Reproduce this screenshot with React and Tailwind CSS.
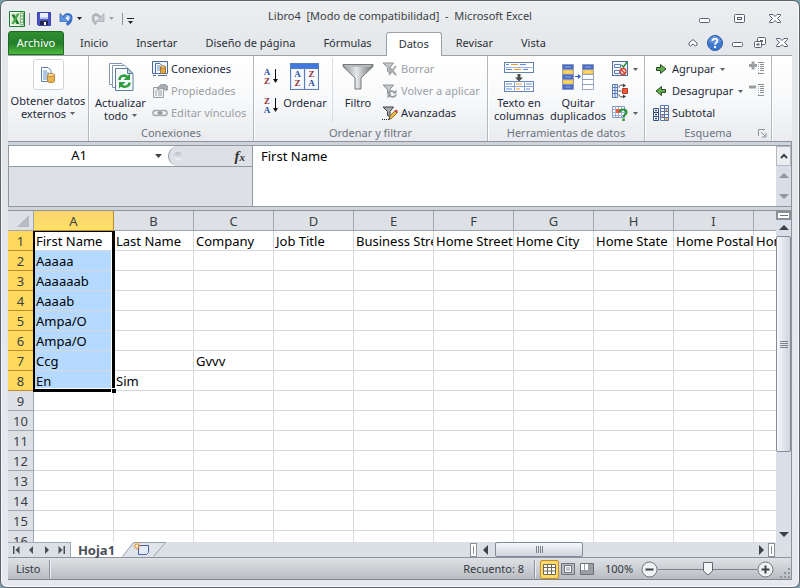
import { useState } from 'react';

const TABS = ['Inicio', 'Insertar', 'Diseño de página', 'Fórmulas', 'Datos', 'Revisar', 'Vista'];
const COLUMNS = ['A', 'B', 'C', 'D', 'E', 'F', 'G', 'H', 'I', 'J'];
const ROWS = [
  ['First Name', 'Last Name', 'Company', 'Job Title', 'Business Street', 'Home Street', 'Home City', 'Home State', 'Home Postal Code', 'Home Country'],
  ['Aaaaa'],
  ['Aaaaaab'],
  ['Aaaab'],
  ['Ampa/O'],
  ['Ampa/O'],
  ['Ccg', '', 'Gvvv'],
  ['En', 'Sim'],
  [], [], [], [], [], [], [], []
];

/* ---------- small shapes ---------- */

function Caret({ className = 'text-[#5a5f66]' }) {
  return (
    <svg width="5" height="3" viewBox="0 0 5 3" className={`inline-block shrink-0 ${className}`}>
      <path d="M0 0h5L2.5 3z" fill="currentColor" />
    </svg>
  );
}

function Arrow({ dir, className = 'text-[#3c4147]' }) {
  const paths = {
    up: 'M0 7L5 2l5 5z',
    down: 'M0 3l5 5 5-5z',
    left: 'M7 0L2 5l5 5z',
    right: 'M3 0l5 5-5 5z'
  };
  return (
    <svg width="10" height="10" viewBox="0 0 10 10" className={`shrink-0 ${className}`}>
      <path d={paths[dir]} fill="currentColor" />
    </svg>
  );
}

function Glyph({ w = 16, h = 16, children }) {
  return (
    <svg width={w} height={h} viewBox={`0 0 ${w} ${h}`} className="shrink-0" fill="none">
      {children}
    </svg>
  );
}

/* ---------- title bar icons ---------- */

const ExcelIcon = () => (
  <Glyph>
    <path d="M.5.5h15v15H.5z" fill="#fff" stroke="#1e7b34" />
    <path d="M11 2h3.500v12H11z" fill="#e7f3e4" stroke="#5aa35f" />
    <path d="M11 5h3.500M11 8h3.500M11 11h3.500" stroke="#5aa35f" />
    <path d="M1.500 2.500L11 1.500v13l-9.500-1z" fill="#d6edcf" />
    <path d="M2.500 3.500h3l5 9.500H7.500z" fill="#1d7a35" />
    <path d="M10.500 2.500H8L2.500 13H5z" fill="#4aa84b" />
  </Glyph>
);

const SaveIcon = () => (
  <Glyph>
    <path d="M1.500 1.500h13v13h-12l-1-1z" fill="#4a52c4" stroke="#3a41a8" />
    <path d="M4 2h8v6H4z" fill="#e9eefb" />
    <path d="M4 6h8v2H4z" fill="#b7c5ee" />
    <path d="M4 10h8v4H4z" fill="#23263f" />
    <path d="M8 11h2v3H8z" fill="#fff" />
  </Glyph>
);

const UndoIcon = () => (
  <Glyph>
    <path d="M6 6.500C8 2.500 13.500 2.500 13 7.500c-.3 2.800-2 4.800-4.500 6" stroke="#3a6fc9" strokeWidth="3" />
    <path d="M2 2.500v8h8z" fill="#5b92e2" stroke="#2d5fb8" strokeWidth=".7" />
    <path d="M6.500 6C8.500 3.500 12.300 4 12.300 7.500" stroke="#9cc2f5" />
  </Glyph>
);

const RedoIcon = () => (
  <Glyph>
    <path d="M10 6.500C8 2.500 2.500 2.500 3 7.500c.3 2.800 1.700 4.500 3.500 5.500" stroke="#b0b4ba" strokeWidth="2.600" />
    <path d="M14 2.500v8H6z" fill="#c6c9ce" stroke="#a3a7ad" strokeWidth=".7" />
  </Glyph>
);

const HelpIcon = () => (
  <Glyph>
    <circle cx="8" cy="8" r="7.500" fill="#3f78cf" stroke="#2a58a8" />
    <path d="M2 7a6 6 0 0112 0c-3 1.500-9 1.500-12 0z" fill="#7ba6e6" opacity=".6" />
    <path d="M5.500 6C5.500 2.800 10.500 3 10.300 6c0 1.800-2.200 1.800-2.300 3.800" stroke="#fff" strokeWidth="1.800" />
    <path d="M7 11h2v2H7z" fill="#fff" />
  </Glyph>
);

const MinimizeIcon = () => (
  <Glyph w={14} h={12}>
    <rect x="1.500" y="5.500" width="10" height="4" rx="1" fill="#fff" stroke="#5a5f72" />
  </Glyph>
);

const MaximizeIcon = () => (
  <Glyph w={14} h={12}>
    <rect x="1.500" y="1.500" width="10" height="8" rx="1" fill="#fff" stroke="#5a5f72" />
    <rect x="4.500" y="4.500" width="4" height="2" stroke="#5a5f72" />
  </Glyph>
);

const RestoreIcon = () => (
  <Glyph w={14} h={12}>
    <rect x="4.500" y=".5" width="8" height="7" rx="1" fill="#fff" stroke="#5a5f72" />
    <rect x="7.500" y="3.500" width="2" height="1" stroke="#5a5f72" />
    <rect x="1.500" y="4.500" width="7" height="6" rx="1" fill="#fff" stroke="#5a5f72" />
    <rect x="4" y="7" width="2" height="1" stroke="#5a5f72" />
  </Glyph>
);

const CloseIcon = () => (
  <Glyph w={14} h={12}>
    <path d="M1.500 1.500h3.500l2 2 2-2h3.500v1L9.500 5.500l3 3v1H9l-2-2-2 2H1.500v-1l3-3-3-3z" fill="#fff" stroke="#5a5f72" />
  </Glyph>
);

const RibbonToggleIcon = () => (
  <Glyph w={12} h={12}>
    <path d="M2 8V6l4-3.500L10 6v2L8.500 9 6 7 3.500 9z" fill="#fff" stroke="#5a5f72" />
  </Glyph>
);

/* ---------- ribbon icons ---------- */

const ExternalDataIcon = () => (
  <Glyph>
    <path d="M1.500.5H8l3 3v11H1.500z" fill="#fff" stroke="#5c7fb0" />
    <path d="M3 4h4M3 6h6M3 8h4M3 10h4M3 12h4" stroke="#5c8fd6" />
    <path d="M7.500 8v6c0 2 7 2 7 0V8z" fill="#e9b455" stroke="#a9741c" strokeWidth=".8" />
    <ellipse cx="11" cy="8" rx="3.500" ry="1.500" fill="#fbe3a5" stroke="#a9741c" strokeWidth=".8" />
  </Glyph>
);

const RefreshAllIcon = () => (
  <Glyph w={28} h={30}>
    <path d="M2.500 1.500H15l4 4v17H2.500z" fill="#fff" stroke="#7d94b3" />
    <path d="M5.500 3.500H18l4 4v18H5.500z" fill="#fff" stroke="#7d94b3" />
    <path d="M8.500 6.500h12l5.500 5v17H8.500z" fill="#f6f9fd" stroke="#5f7ba0" />
    <path d="M20.500 6.500v5H26z" fill="#c8d6ea" stroke="#5f7ba0" />
    <path d="M12.500 18c0-4.500 5-5.500 8-3" stroke="#2f9e3b" strokeWidth="2.500" />
    <path d="M23 11.500v6.500h-6.500z" fill="#2f9e3b" />
    <path d="M22.500 20.500c0 4-5 5.500-8 3" stroke="#2f9e3b" strokeWidth="2.500" />
    <path d="M12 26.500V20h6.500z" fill="#2f9e3b" />
  </Glyph>
);

const ConnectionsIcon = () => (
  <Glyph>
    <path d="M.5.500h15v12H.5z" fill="#eef4fc" stroke="#4f6a92" />
    <path d="M1 14.500h3M6 14.500h9" stroke="#4f6a92" />
    <path d="M3.500 2.500H8l1.500 2v8h-6z" fill="#fff" stroke="#4d70a8" />
    <path d="M5 5h3M5 7h3M5 9h3" stroke="#5c8fd6" />
    <path d="M8.500 6v5.500c0 1.500 5 1.500 5 0V6z" fill="#e2a642" stroke="#8c6018" strokeWidth=".8" />
    <ellipse cx="11" cy="6" rx="2.500" ry="1.200" fill="#fbe3a5" stroke="#8c6018" strokeWidth=".8" />
  </Glyph>
);

const PropertiesIcon = () => (
  <Glyph>
    <path d="M1.500 4.500h10v10h-10z" fill="#f2f3f4" stroke="#9a9ea4" />
    <path d="M3 8h2M6 8h4M3 10h2M6 10h4M3 12h2M6 12h4" stroke="#9a9ea4" />
    <path d="M5 5l4-3.500h4.500L15.500 3v4l-2 .5-2-2H8L6 7z" fill="#a9adb2" stroke="#8d9197" strokeWidth=".8" />
  </Glyph>
);

const LinksIcon = () => (
  <Glyph>
    <rect x="1" y="5.500" width="8" height="5" rx="2.500" stroke="#a3a7ac" strokeWidth="1.500" />
    <rect x="7" y="5.500" width="8" height="5" rx="2.500" stroke="#a3a7ac" strokeWidth="1.500" />
    <path d="M5 8h6" stroke="#85898f" />
  </Glyph>
);

function AzMark({ x, y, flip }) {
  const top = flip ? 'Z' : 'A';
  const bottom = flip ? 'A' : 'Z';
  return (
    <g fontFamily="Liberation Serif, serif" fontSize="9" fontWeight="bold" textAnchor="middle">
      <text x={x} y={y} fill={flip ? '#8e2f36' : '#2c4f9c'}>{top}</text>
      <text x={x} y={y + 9} fill={flip ? '#2c4f9c' : '#8e2f36'}>{bottom}</text>
    </g>
  );
}

const SortIcon = ({ flip }) => (
  <Glyph w={16} h={17}>
    <AzMark x={4} y={7} flip={flip} />
    <path d="M12.500 1v13" stroke="#111" />
    <path d="M10 11h5l-2.500 4z" fill="#111" />
  </Glyph>
);

const SortDialogIcon = () => (
  <Glyph w={30} h={28}>
    <rect x=".5" y=".5" width="28" height="26" fill="#dfe9f8" stroke="#5b7fb8" />
    <path d="M1 1h27v4H1z" fill="#3f79e0" />
    <path d="M1 5.500h27M14.500 5v21" stroke="#5b7fb8" />
    <path d="M2 6.500h11.500v19H2zM16 6.500h11.500v19H16z" fill="#f7faff" />
    <AzMark x={7.5} y={14} />
    <AzMark x={21.5} y={14} flip />
  </Glyph>
);

const FilterIcon = () => (
  <Glyph w={32} h={28}>
    <defs>
      <linearGradient id="funnel" x1="0" x2="1">
        <stop offset="0" stopColor="#8c8f92" />
        <stop offset=".45" stopColor="#e6e7e8" />
        <stop offset="1" stopColor="#6f7275" />
      </linearGradient>
    </defs>
    <path d="M1 1.500h30v2L19 15v11h-6V15L1 3.500z" fill="url(#funnel)" stroke="#76797c" />
    <path d="M2 2h28l-2 2H4z" fill="#b9bbbd" />
  </Glyph>
);

function SmallFunnel({ dark }) {
  const c = dark ? '#3c3f43' : '#8d9196';
  return <path d="M1 2h10.500L8 6.500V12L5.500 10.500v-4z" fill={dark ? '#a9acb0' : '#c4c7ca'} stroke={c} />;
}

const ClearIcon = () => (
  <Glyph>
    <SmallFunnel />
    <path d="M7 6l7 8M14 5L7 14" stroke="#a5a8ac" strokeWidth="2" />
  </Glyph>
);

const ReapplyIcon = () => (
  <Glyph>
    <SmallFunnel />
    <path d="M6 10.500c1-3 5-3 6.500-1M14 11.500c-1 3-5 3-6.500 1" stroke="#97999d" strokeWidth="1.800" />
    <path d="M14.500 6.500v4h-4zM5.500 15.500v-4h4z" fill="#97999d" />
  </Glyph>
);

const AdvancedIcon = () => (
  <Glyph>
    <SmallFunnel dark />
    <path d="M0 14.500h7" stroke="#222" strokeDasharray="1 1" />
    <path d="M7 14.500l1-3.500 5-5.500 2.500 2L10 13z" fill="#eab94a" stroke="#7a5a18" strokeWidth=".8" />
    <path d="M12.500 6l1.500-1.500 2 1.500-1.500 2z" fill="#c5453f" />
    <path d="M7 14.500l.5-2 1.200 1.200z" fill="#222" />
  </Glyph>
);

const TextColumnsIcon = () => (
  <Glyph w={32} h={32}>
    <rect x="1.500" y="1.500" width="29" height="10" fill="#fff" stroke="#6282b4" />
    <path d="M1 6.500h30" stroke="#9fb6d8" />
    <path d="M3 3.500h3M17 3.500h6M3 8.500h6M20 8.500h5" stroke="#5a8be0" />
    <path d="M8 3.500h7M11 8.500h7" stroke="#f0992e" />
    <path d="M14.500 13h3v3.500H20l-4 4-4-4h2.500z" fill="#4d4f52" />
    <rect x="1.500" y="20.500" width="29" height="10" fill="#fff" stroke="#6282b4" />
    <path d="M1 25.500h30M11.500 20v11M21.500 20v11" stroke="#8ba6cf" />
    <path d="M3 23h6M23 23h6M3 28h6M23 28h4" stroke="#5a8be0" />
    <path d="M13 23h6M13 28h4" stroke="#f0992e" />
  </Glyph>
);

const DuplicatesIcon = () => (
  <Glyph w={32} h={26}>
    {['#4468c8', '#f3c54a', '#4468c8', '#f3c54a', '#4468c8'].map((fill, i) => (
      <g key={i}>
        <rect x=".5" y={i * 5 + 0.5} width="11" height="5" fill={fill} stroke="#8594b8" strokeWidth=".8" />
        <path d={`M3 ${i * 5 + 3.500}l1-1 1 1 1-1 1 1 1-1 1 1`} stroke={i % 2 ? '#fff3c4' : '#a9c0f2'} />
      </g>
    ))}
    {['#4468c8', '#f3c54a', '#fff', '#fff', '#fff'].map((fill, i) => (
      <rect key={i} x="20.500" y={i * 5 + 0.5} width="11" height="5" fill={fill} stroke="#8594b8" strokeWidth=".8" />
    ))}
    <path d="M23 3.500l1-1 1 1 1-1 1 1 1-1 1 1" stroke="#a9c0f2" />
    <path d="M23 8.500l1-1 1 1 1-1 1 1 1-1 1 1" stroke="#fff3c4" />
    <path d="M13 12.500h4" stroke="#2e5fc4" />
    <path d="M16 10l3 2.500-3 2.500z" fill="#2e5fc4" />
  </Glyph>
);

const ValidationIcon = () => (
  <Glyph>
    <rect x=".5" y=".5" width="15" height="14" fill="#f3f7fd" stroke="#4f6f9f" />
    <path d="M2.500 3.500h6v3h-6zM2.500 9.500h5v3h-5z" fill="#fff" stroke="#5b7fb8" />
    <path d="M9.500 4l2 2 3.500-5" stroke="#2f8f35" strokeWidth="1.500" />
    <circle cx="11" cy="10.500" r="3" fill="#fbe0dc" stroke="#d8402f" strokeWidth="1.300" />
    <path d="M9 8.500l4 4" stroke="#d8402f" strokeWidth="1.300" />
  </Glyph>
);

const ConsolidateIcon = () => (
  <Glyph>
    <path d="M.5 1.500h5v13h-5z" fill="#eef3fb" stroke="#5a7cb4" />
    <path d="M.5 4.500h5M.5 7.500h5M.5 10.500h5M3 1.500v13" stroke="#5a7cb4" />
    <path d="M7 4.500c0-2 2-3 5-2M7 11.500c0 2 2 3 5 2" stroke="#444" />
    <path d="M11 .5l3 2-3 2zM11 11.500l3 2-3 2z" fill="#444" />
    <path d="M6.500 8h3" stroke="#444" />
    <path d="M10.500 5.500h5v5h-5z" fill="#ef5a3c" stroke="#b93822" />
  </Glyph>
);

const WhatIfIcon = () => (
  <Glyph>
    <path d="M.5 1.500h12v11H.5z" fill="#fff" stroke="#7d96c2" />
    <path d="M.5 4.500h12M.5 7.500h12M.5 10.500h12M3.500 1.500v11M6.500 1.500v11M9.500 1.500v11" stroke="#9fb4d8" />
    <path d="M4 4h4v4H4z" fill="#ef5a3c" />
    <path d="M8 7.500c0-4 6.500-4 6.500 0 0 2-3 2.300-3 4.500" stroke="#2f9638" strokeWidth="2.200" />
    <path d="M10.300 13.500h2.500V16h-2.500z" fill="#2f9638" />
  </Glyph>
);

const GroupIcon = () => (
  <Glyph w={12} h={12}>
    <path d="M1.500 4.500h4V1.500L11 6l-5.500 4.500v-3h-4z" fill="#62ad4c" stroke="#2e4a2a" />
  </Glyph>
);

const UngroupIcon = () => (
  <Glyph w={12} h={12}>
    <path d="M10.500 4.500h-4V1.500L1 6l5.500 4.500v-3h4z" fill="#62ad4c" stroke="#2e4a2a" />
  </Glyph>
);

const SubtotalIcon = () => (
  <Glyph>
    <path d="M.5 3.500h5v12h-5z" fill="#fff" stroke="#35507f" />
    <path d="M.5 7.500h5M.5 11.500h5M3 4.500v2M2 5.500h2M3 8.500v2M2 9.500h2M3 12.500v2M2 13.500h2" stroke="#35507f" />
    <path d="M7.500.5h8v15h-8z" fill="#fff" stroke="#5577b0" />
    <path d="M7.500 3.500h8M7.500 6.500h8M7.500 9.500h8M7.500 12.500h8M11.500.5v15" stroke="#5577b0" />
    <path d="M12.500 5h2M8.500 11h2M12.500 14h2" stroke="#e8923a" strokeWidth="2" />
  </Glyph>
);

const DetailIcon = ({ minus }) => (
  <Glyph>
    {minus ? <path d="M0 2.500h7v3H0z" fill="#9b9ea2" /> : <path d="M2.500 0.500h3v2.500H8v3H5.500v2.500h-3V6H0V3h2.500z" fill="#9b9ea2" />}
    <path d="M9 1.500h6M11 3.500h4M11 5.500h4M11 7.500h4M11 9.500h4M9 12.500h6" stroke="#8a8d91" />
    <path d="M9.500 3v9" stroke="#b1b4b8" strokeDasharray="1 1" />
  </Glyph>
);

/* ---------- ribbon building blocks ---------- */

function Group({ title, launcher, className, children }) {
  return (
    <section className={`flex flex-col shrink-0 border-r border-[#b3b8bf] shadow-[1px_0_0_#ffffff] ${className}`}>
      <div className="flex flex-1 items-start pt-[2px]">{children}</div>
      <div className="relative flex h-4 items-center justify-center text-[#6a7380]">
        {title}
        {launcher && (
          <button aria-label="Más opciones" className="absolute right-1 top-1">
            <Glyph w={9} h={9}>
              <path d="M.5 7V.5H7M3 3l4 4M8 4v4H4" stroke="#8a919b" />
            </Glyph>
          </button>
        )}
      </div>
    </section>
  );
}

function LargeButton({ icon, lines, caret, className = '' }) {
  return (
    <button className={`flex flex-col items-center pt-[3px] leading-[13px] whitespace-nowrap text-[#1e2a3a] ${className}`}>
      <span className="mb-[3px] flex h-8 items-center justify-center">{icon}</span>
      {lines.map((line, i) => (
        <span key={line} className="flex items-center gap-1">
          {line}
          {caret && i === lines.length - 1 && <Caret />}
        </span>
      ))}
    </button>
  );
}

function SmallButton({ icon, label, caret, disabled, className = '' }) {
  return (
    <button
      disabled={disabled}
      className={`flex h-[22px] items-center gap-[3px] whitespace-nowrap ${disabled ? 'text-[#9a9fa6]' : 'text-[#1e2a3a]'} ${className}`}
    >
      {icon}
      {label}
      {caret && <Caret className="ml-[2px] text-[#5a5f66]" />}
    </button>
  );
}

function Ribbon() {
  return (
    <div className="flex h-[86px] shrink-0 overflow-hidden border-b border-[#8c939b] bg-linear-to-b from-white via-[#f8f9fa] to-[#e9ebee]">
      <Group title="" className="w-[81px]">
        <button className="flex w-full flex-col items-center pt-px leading-[13px] whitespace-nowrap text-[#1e2a3a]">
          <span className="mb-1 flex h-[31px] w-[31px] items-center justify-center rounded-[3px] border border-[#d0d3d8] bg-white">
            <ExternalDataIcon />
          </span>
          <span>Obtener datos</span>
          <span className="flex items-center gap-1">externos <Caret /></span>
        </button>
      </Group>

      <Group title="Conexiones" className="w-[165px]">
        <LargeButton icon={<RefreshAllIcon />} lines={['Actualizar', 'todo']} caret className="w-[63px]" />
        <div className="flex flex-col">
          <SmallButton icon={<ConnectionsIcon />} label="Conexiones" />
          <SmallButton icon={<PropertiesIcon />} label="Propiedades" disabled />
          <SmallButton icon={<LinksIcon />} label="Editar vínculos" disabled />
        </div>
      </Group>

      <Group title="Ordenar y filtrar" className="w-[234px]">
        <div className="flex w-[25px] flex-col items-end gap-3 pt-[10px]">
          <button aria-label="Ordenar de A a Z"><SortIcon /></button>
          <button aria-label="Ordenar de Z a A"><SortIcon flip /></button>
        </div>
        <LargeButton icon={<SortDialogIcon />} lines={['Ordenar']} className="w-[52px]" />
        <div className="mx-px h-16 border-l border-[#d9dce0]" />
        <LargeButton icon={<FilterIcon />} lines={['Filtro']} className="w-12" />
        <div className="flex flex-col">
          <SmallButton icon={<ClearIcon />} label="Borrar" disabled />
          <SmallButton icon={<ReapplyIcon />} label="Volver a aplicar" disabled />
          <SmallButton icon={<AdvancedIcon />} label="Avanzadas" />
        </div>
      </Group>

      <Group title="Herramientas de datos" className="w-[157px]">
        <LargeButton icon={<TextColumnsIcon />} lines={['Texto en', 'columnas']} className="w-[62px]" />
        <LargeButton icon={<DuplicatesIcon />} lines={['Quitar', 'duplicados']} className="w-[56px]" />
        <div className="flex flex-col pl-[6px]">
          <SmallButton icon={<ValidationIcon />} caret />
          <SmallButton icon={<ConsolidateIcon />} />
          <SmallButton icon={<WhatIfIcon />} caret />
        </div>
      </Group>

      <Group title="Esquema" launcher className="w-[127px]">
        <div className="flex flex-1 flex-col pl-2">
          <SmallButton icon={<span className="flex w-4 justify-center"><GroupIcon /></span>} label="Agrupar" caret />
          <SmallButton icon={<span className="flex w-4 justify-center"><UngroupIcon /></span>} label="Desagrupar" caret />
          <SmallButton icon={<SubtotalIcon />} label="Subtotal" />
        </div>
        <div className="flex flex-col pr-[6px]">
          <SmallButton icon={<DetailIcon />} disabled />
          <SmallButton icon={<DetailIcon minus />} disabled />
        </div>
      </Group>
    </div>
  );
}

/* ---------- window parts ---------- */

function TitleBar() {
  return (
    <header className="grid h-[31px] shrink-0 grid-cols-[1fr_auto_1fr] items-center pt-1">
      <div className="flex items-center pl-px">
        <ExcelIcon />
        <span className="mx-1 h-3 border-l border-[#8a919b]" />
        <button aria-label="Guardar" className="ml-[2px]"><SaveIcon /></button>
        <button aria-label="Deshacer" className="ml-[6px] flex items-center gap-[3px]">
          <UndoIcon /><Caret className="text-[#222]" />
        </button>
        <button aria-label="Rehacer" disabled className="ml-2 flex items-center gap-[3px]">
          <RedoIcon /><Caret className="text-[#9a9fa6]" />
        </button>
        <span className="ml-2 h-3 border-l border-[#8a919b]" />
        <button aria-label="Personalizar" className="ml-1 flex flex-col items-center gap-[2px] pt-1">
          <span className="w-[7px] border-t border-[#222]" />
          <Caret className="text-[#222]" />
        </button>
      </div>
      <h1 className="whitespace-pre pb-1 text-[#3b3f45]">Libro4  [Modo de compatibilidad]  -  Microsoft Excel</h1>
      <div className="flex items-center justify-end gap-[21px] pr-[10px]">
        <button aria-label="Minimizar"><MinimizeIcon /></button>
        <button aria-label="Maximizar"><MaximizeIcon /></button>
        <button aria-label="Cerrar"><CloseIcon /></button>
      </div>
    </header>
  );
}

function TabBar({ active, onSelect }) {
  return (
    <nav className="flex h-6 shrink-0 items-end border-b border-[#9ba2aa]">
      <button className="mr-[2px] flex h-6 w-14 items-center justify-center rounded-t-[3px] border border-[#1c6b22] bg-linear-to-b from-[#2f8f2f] via-[#237f2a] to-[#4fb83f] text-white">
        Archivo
      </button>
      {TABS.map((tab) => (
        <button
          key={tab}
          onClick={() => onSelect(tab)}
          className={
            tab === active
              ? '-mb-px flex h-6 items-center whitespace-nowrap rounded-t-[3px] border border-b-0 border-[#9ba2aa] bg-white px-3 text-[#2b3038]'
              : 'flex h-6 items-center whitespace-nowrap px-[14px] text-[#2b3038]'
          }
        >
          {tab}
        </button>
      ))}
      <div className="ml-auto flex h-6 items-center gap-2 pr-[3px]">
        <button aria-label="Minimizar la cinta de opciones"><RibbonToggleIcon /></button>
        <button aria-label="Ayuda"><HelpIcon /></button>
        <button aria-label="Minimizar libro"><MinimizeIcon /></button>
        <button aria-label="Restaurar libro"><RestoreIcon /></button>
        <button aria-label="Cerrar libro"><CloseIcon /></button>
      </div>
    </nav>
  );
}

function FormulaBar() {
  return (
    <div className="mt-[3px] flex h-[62px] shrink-0 border border-r-0 border-[#9098a1] bg-[#dde1e6] text-[13px] text-black">
      <div className="w-[243px] shrink-0">
        <div className="flex h-[21px] border-b border-[#9098a1] bg-white">
          <input aria-label="Cuadro de nombres" defaultValue="A1" className="w-[140px] bg-transparent text-center outline-none" />
          <button aria-label="Elegir nombre" className="flex w-[19px] items-center justify-center">
            <svg width="7" height="4" viewBox="0 0 7 4"><path d="M0 0h7L3.500 4z" fill="#3c4147" /></svg>
          </button>
          <div className="flex flex-1 items-center justify-between rounded-l-full border-l border-[#9098a1] bg-[#dde1e6] pr-[7px] pl-[5px]">
            <span className="h-2 w-2 rounded-full bg-linear-to-b from-[#b9bdc4] to-[#f3f4f6]" />
            <button aria-label="Insertar función" className="font-['Liberation_Serif',serif] text-[15px] leading-none font-bold text-[#333] italic">
              f<span className="text-[11px]">x</span>
            </button>
          </div>
        </div>
      </div>
      <textarea
        aria-label="Barra de fórmulas"
        defaultValue="First Name"
        className="flex-1 resize-none overflow-hidden border-l border-[#9098a1] bg-white px-2 py-px leading-[18px] outline-none"
      />
      <div className="flex w-[15px] shrink-0 flex-col items-center bg-[#d9dee6]">
        <button aria-label="Contraer barra" className="flex h-5 w-full items-center justify-center border border-[#b5bac2] bg-[#eceef1]">
          <svg width="8" height="6" viewBox="0 0 8 6" fill="none"><path d="M1 5l3-3 3 3" stroke="#3c4147" strokeWidth="2" /></svg>
        </button>
        <button aria-label="Línea anterior" className="flex flex-1 items-center"><Arrow dir="up" className="text-[#8d9899]" /></button>
        <button aria-label="Línea siguiente" className="flex flex-1 items-center"><Arrow dir="down" className="text-[#8d9899]" /></button>
      </div>
    </div>
  );
}

function Sheet() {
  return (
    <div className="relative min-h-0 min-w-0 flex-1 overflow-hidden bg-white">
      <table className="w-[826px] table-fixed border-separate border-spacing-0 text-[13px] text-black">
        <colgroup>
          <col className="w-[26px]" />
          {COLUMNS.map((c) => <col key={c} className="w-20" />)}
        </colgroup>
        <thead>
          <tr className="h-5">
            <th aria-label="Seleccionar todo" className="border-r border-b border-[#9ea6af] bg-[#dde1e6] p-0">
              <svg width="12" height="12" viewBox="0 0 12 12" className="ml-auto mr-1"><path d="M12 0v12H0z" fill="#b8bcc2" /></svg>
            </th>
            {COLUMNS.map((c) => (
              <th
                key={c}
                className={
                  c === 'A'
                    ? 'h-5 border-r border-b border-[#c08a2e] bg-linear-to-b from-[#f8d56b] to-[#fee067] p-0 pt-[2px] leading-[17px] font-normal text-[#3b3f45]'
                    : 'h-5 border-r border-b border-[#9ea6af] bg-[#dde1e6] p-0 pt-[2px] leading-[17px] font-normal text-[#3b3f45]'
                }
              >
                {c}
              </th>
            ))}
          </tr>
        </thead>
        <tbody>
          {ROWS.map((row, r) => (
            <tr key={r} className="h-5">
              <th
                className={
                  r < 8
                    ? 'h-5 border-r border-b border-[#c08a2e] bg-[#fed95c] p-0 pt-[2px] leading-[17px] font-normal text-[#3b3f45]'
                    : 'h-5 border-r border-b border-[#9ea6af] bg-[#dde1e6] p-0 pt-[2px] leading-[17px] font-normal text-[#3b3f45]'
                }
              >
                {r + 1}
              </th>
              {COLUMNS.map((c, i) => (
                <td
                  key={c}
                  className={`h-5 overflow-hidden border-r border-b border-[#d6d8db] p-0 pt-[2px] pl-[2px] leading-[17px] whitespace-nowrap ${i === 0 && r > 0 && r < 8 ? 'bg-[#b5d9ff]' : ''}`}
                >
                  {row[i]}
                </td>
              ))}
            </tr>
          ))}
        </tbody>
      </table>
      {/* selection frame over A1:A8 */}
      <div className="pointer-events-none absolute top-5 left-[25px] h-[161px] w-[82px] border-t border-r-[3px] border-b-[3px] border-l-2 border-black shadow-[inset_-1px_-1px_0_#fff]">
        <span className="absolute -right-1 -bottom-1 h-[5px] w-[5px] border-t border-l border-white bg-black" />
      </div>
    </div>
  );
}

function VerticalScroll() {
  return (
    <div className="flex w-[15px] shrink-0 flex-col items-center bg-[#d9dfe8]">
      <div className="flex h-[9px] w-full items-center justify-center border-2 border-[#8b9199] bg-white">
        <span className="w-2 border-t border-[#6b7178]" />
      </div>
      <button aria-label="Subir" className="flex h-4 items-center"><Arrow dir="up" /></button>
      <div className="flex h-[216px] w-full flex-col items-center justify-center gap-px rounded-[2px] border border-[#828b98] bg-linear-to-r from-[#f5f7f9] to-[#cfd5de]">
        {[0, 1, 2, 3].map((i) => <span key={i} className="w-2 border-t border-[#7b828b]" />)}
      </div>
      <button aria-label="Bajar" className="mt-auto flex h-4 items-center"><Arrow dir="down" /></button>
    </div>
  );
}

function SheetTabs() {
  return (
    <div className="flex h-4 shrink-0 items-stretch border-b border-[#8c939b] bg-[#dbe0e7]">
      <div className="flex w-[63px] items-center justify-between border-t border-r border-[#a3abb5] px-1 text-[#4a4f57]">
        <button aria-label="Primera hoja"><Glyph w={8} h={8}><path d="M1 0h1.500v8H1zM7.500 0v8l-4-4z" fill="currentColor" /></Glyph></button>
        <button aria-label="Hoja anterior"><Glyph w={8} h={8}><path d="M6 0v8L2 4z" fill="currentColor" /></Glyph></button>
        <button aria-label="Hoja siguiente"><Glyph w={8} h={8}><path d="M2 0v8l4-4z" fill="currentColor" /></Glyph></button>
        <button aria-label="Última hoja"><Glyph w={8} h={8}><path d="M5.500 0H7v8H5.500zM.5 0v8l4-4z" fill="currentColor" /></Glyph></button>
      </div>
      <button className="flex w-[51px] items-center justify-center bg-white pt-[2px] text-[13px] leading-none font-bold text-[#4a4f57]">Hoja1</button>
      <button aria-label="Insertar hoja" className="flex">
        <Glyph w={48} h={15}>
          <path d="M0 0h11L0 15z" fill="#fff" />
          <path d="M.5 14.500L11.500.5h32L31.500 14.500z" fill="#dfe4ea" />
          <path d="M.5 14.500L11.500.5h32L31.500 14.500" stroke="#9aa2ac" />
          <path d="M16.500 3.500h10v7l-2 2h-8z" fill="#e4ecfa" stroke="#4a62a0" />
          <path d="M15 0v8M11 4h8M12.500 1.500l5 5M17.500 1.500l-5 5" stroke="#e8922a" />
          <path d="M14 3h2v2h-2z" fill="#fff3c4" />
        </Glyph>
      </button>
      <div className="flex flex-1 items-center justify-end">
        <span className="h-[14px] w-[7px] border border-[#8b9199] bg-white p-[2px]"><span className="block h-full w-px bg-[#8b9199]" /></span>
        <button aria-label="Izquierda" className="px-1"><Arrow dir="left" /></button>
        <div className="flex h-[15px] w-[88px] items-center justify-center gap-px rounded-[2px] border border-[#828b98] bg-linear-to-b from-[#f5f7f9] to-[#cfd5de]">
          {[0, 1, 2, 3].map((i) => <span key={i} className="h-[7px] border-l border-[#7b828b]" />)}
        </div>
        <div className="w-[171px]" />
        <button aria-label="Derecha" className="px-[2px]"><Arrow dir="right" /></button>
        <span className="h-[14px] w-[7px] border border-[#8b9199] bg-white p-[2px]"><span className="block h-full w-px bg-[#8b9199]" /></span>
        <span className="w-4" />
      </div>
    </div>
  );
}

function StatusBar() {
  return (
    <footer className="flex h-[22px] shrink-0 items-center border-b border-[#7f868e] bg-linear-to-b from-[#dfe2e5] to-[#b9bdc2] pt-px text-[#33383f]">
      <span className="w-[41px] pl-2">Listo</span>
      <span className="h-[18px] border-r border-l border-r-[#eceef0] border-l-[#8c939b]" />
      <div className="ml-auto flex items-center">
        <span>Recuento: 8</span>
        <span className="mr-1 ml-[10px] h-[18px] border-r border-l border-r-[#eceef0] border-l-[#8c939b]" />
        <button aria-label="Normal" className="flex h-[19px] w-[19px] items-center justify-center rounded-[2px] border border-[#c98a2b] bg-[#fdd965]">
          <Glyph w={13} h={11}><path d="M.5.5h12v10H.5zM.5 3.500h12M.5 7h12M4.500.5v10M8.500.5v10" fill="#fff" stroke="#6f6a55" /></Glyph>
        </button>
        <button aria-label="Diseño de página" className="ml-[2px]">
          <Glyph w={14} h={12}><path d="M.5.5h13v11H.5z" fill="#b9bcc0" stroke="#6d7278" /><path d="M3.500 2.500h7v7h-7z" fill="#fff" stroke="#6d7278" /><path d="M5 5h4M5 7h4" stroke="#8b9096" /></Glyph>
        </button>
        <button aria-label="Saltos de página" className="ml-[5px]">
          <Glyph w={14} h={12}><path d="M.5.5h13v11H.5z" fill="#9a9ea3" stroke="#6d7278" /><path d="M1 1h3v6H1zM5 1h3v6H5z" fill="#fff" /></Glyph>
        </button>
        <span className="ml-[11px] w-9">100%</span>
        <button aria-label="Alejar">
          <Glyph w={17} h={17}><circle cx="8.500" cy="8.500" r="7.500" fill="#eff1f3" stroke="#70767e" /><path d="M4.500 8.500h8" stroke="#3e434a" strokeWidth="2" /></Glyph>
        </button>
        <span className="flex w-[99px] items-center">
          <span className="h-px flex-1 bg-[#7a818a]" />
          <Glyph w={10} h={14}><path d="M.5.5h9v8.500L5 13 .5 9z" fill="#f1f3f5" stroke="#646a72" /></Glyph>
          <span className="h-px flex-1 bg-[#7a818a]" />
        </span>
        <button aria-label="Acercar">
          <Glyph w={17} h={17}><circle cx="8.500" cy="8.500" r="7.500" fill="#eff1f3" stroke="#70767e" /><path d="M4.500 8.500h8M8.500 4.500v8" stroke="#3e434a" strokeWidth="2" /></Glyph>
        </button>
        <span className="ml-[5px] self-end">
          <Glyph w={12} h={12}><path d="M9 1h2v2H9zM5 5h2v2H5zM9 5h2v2H9zM1 9h2v2H1zM5 9h2v2H5zM9 9h2v2H9z" fill="#8f959c" /></Glyph>
        </span>
      </div>
    </footer>
  );
}

export default function App() {
  const [tab, setTab] = useState('Datos');

  return (
    <div className="h-screen overflow-hidden bg-[#7d9aa8] font-['Noto_Sans','Open_Sans',sans-serif] text-[11px]">
      <div className="flex h-full flex-col rounded-[7px] border border-[#5b636c] bg-linear-to-b from-[#eceef0] via-[#e3e6e9] via-10% to-[#e6e9ed] px-[7px] pb-[7px] shadow-[inset_0_0_0_1px_#f7f8fa]">
        <TitleBar />
        <TabBar active={tab} onSelect={setTab} />
        <Ribbon />
        <main className="flex min-h-0 flex-1 flex-col border-r border-[#8c939b] bg-[#cfd4da]">
          <FormulaBar />
          <div className="mt-[3px] flex min-h-0 flex-1 border-t border-[#8c939b]">
            <Sheet />
            <VerticalScroll />
          </div>
          <SheetTabs />
          <StatusBar />
        </main>
      </div>
    </div>
  );
}
